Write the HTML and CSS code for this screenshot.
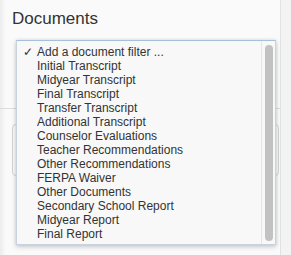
FILE: index.html
```html
<!DOCTYPE html>
<html lang="en">
<head>
  <meta charset="UTF-8">
  <title>Documents</title>
  <link rel="stylesheet" href="styles.css">
</head>
<body>
  <div class="page">
    <div class="panel">
      <h2 class="title">Documents</h2>
      <hr class="divider">
      <div class="filter-box"></div>

      <div class="dropdown">
        <ul class="options">
          <li class="selected"><span class="check">✓</span>Add a document filter ...</li>
          <li>Initial Transcript</li>
          <li>Midyear Transcript</li>
          <li>Final Transcript</li>
          <li>Transfer Transcript</li>
          <li>Additional Transcript</li>
          <li>Counselor Evaluations</li>
          <li>Teacher Recommendations</li>
          <li>Other Recommendations</li>
          <li>FERPA Waiver</li>
          <li>Other Documents</li>
          <li>Secondary School Report</li>
          <li>Midyear Report</li>
          <li>Final Report</li>
        </ul>
        <div class="track"><div class="thumb"></div></div>
      </div>
    </div>
    <div class="side"></div>
  </div>
</body>
</html>
```

FILE: styles.css
```css
html, body {
  margin: 0;
  padding: 0;
  height: 100%;
}
body {
  font-family: "Liberation Sans", Arial, sans-serif;
  background: #f4f4f4;
  color: #333;
}
.page {
  display: flex;
  height: 255px;
}
.panel {
  position: relative;
  width: 280px;
  background: linear-gradient(to right, #ececec 0, #fafafa 6px, #fafafa 100%);
  border-right: 1px solid #e2e2e2;
}
.side {
  flex: 1;
  background: #f3f3f3;
}
.title {
  margin: 0;
  padding: 8px 0 0 12px;
  font-family: "Liberation Sans", Arial, sans-serif;
  font-weight: normal;
  font-size: 17px;
  line-height: 22px;
  color: #333;
}
.divider {
  margin: 78px 0 0 0;
  border: none;
  border-top: 1px solid #dcdcdc;
}
.filter-box {
  margin: 15px 1px 0 12px;
  height: 50px;
  border: 1px solid #d4d4d4;
  border-radius: 4px;
  background: #fbfbfb;
}
.dropdown {
  position: absolute;
  left: 16px;
  top: 40px;
  width: 258px;
  height: 203px;
  display: flex;
  background: #f8f8f8;
  border: 1px solid #c8d3de;
  border-top-color: #a9c0d8;
  box-shadow: 0 2px 5px rgba(0, 0, 0, 0.18), 0 0 3px rgba(120, 160, 200, 0.25);
}
.options {
  flex: 1;
  list-style: none;
  margin: 0;
  padding: 4px 0 0 20px;
  font-family: "Liberation Sans", Arial, sans-serif;
  font-size: 12px;
  line-height: 14px;
  color: #333;
}
.options li {
  position: relative;
  white-space: nowrap;
}
.check {
  position: absolute;
  left: -14px;
}
.track {
  width: 14px;
  border-left: 1px solid #e6e6e6;
  padding: 4px 2px 3px 3px;
  box-sizing: border-box;
}
.thumb {
  width: 8px;
  height: 100%;
  border-radius: 4px;
  background: #c2c2c2;
}
```
